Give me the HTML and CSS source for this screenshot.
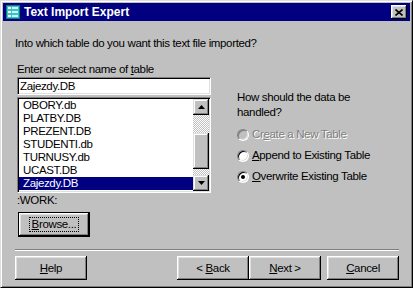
FILE: index.html
```html
<!DOCTYPE html>
<html lang="en">
<head>
    <meta charset="UTF-8">
    <title>Text Import Expert</title>
    <link rel="stylesheet" href="styles.css">
</head>
<body>
    <div class="window">
        <div class="titlebar">
            <svg class="app-icon" viewBox="0 0 16 16" width="16" height="16">
                <rect x="1" y="1" width="14" height="14" fill="#008080"/>
                <rect x="2" y="2" width="12" height="12" fill="#40c0c0"/>
                <rect x="3" y="3" width="3" height="2" fill="#fff"/>
                <rect x="7" y="3" width="6" height="2" fill="#c0ffff"/>
                <rect x="3" y="7" width="3" height="2" fill="#fff"/>
                <rect x="7" y="7" width="6" height="2" fill="#c0ffff"/>
                <rect x="3" y="11" width="3" height="2" fill="#fff"/>
                <rect x="7" y="11" width="6" height="2" fill="#c0ffff"/>
            </svg>
            <span class="title">Text Import Expert</span>
            <button class="close">
                <svg viewBox="0 0 8 7" width="8" height="7">
                    <path d="M0.5 0.5 L7.5 6.5 M7.5 0.5 L0.5 6.5" stroke="#000" stroke-width="1.6"/>
                </svg>
            </button>
        </div>

        <div class="content">
            <p class="prompt">Into which table do you want this text file imported?</p>

            <div class="main">
                <div class="left">
                    <label class="field-label">Enter or select name of <u>t</u>able</label>
                    <div class="edit">Zajezdy.DB</div>
                    <div class="listbox">
                        <ul class="items">
                            <li>OBORY.db</li>
                            <li>PLATBY.DB</li>
                            <li>PREZENT.DB</li>
                            <li>STUDENTI.db</li>
                            <li>TURNUSY.db</li>
                            <li>UCAST.DB</li>
                            <li class="selected">Zajezdy.DB</li>
                        </ul>
                        <div class="scrollbar">
                            <div class="sb-btn">
                                <svg viewBox="0 0 7 4" width="7" height="4"><polygon points="3.5,0 7,4 0,4" fill="#000"/></svg>
                            </div>
                            <div class="sb-track"><div class="sb-thumb"></div></div>
                            <div class="sb-btn">
                                <svg viewBox="0 0 7 4" width="7" height="4"><polygon points="0,0 7,0 3.5,4" fill="#000"/></svg>
                            </div>
                        </div>
                    </div>
                    <div class="path">:WORK:</div>
                    <button class="btn default"><span class="focus"><u>B</u>rowse...</span></button>
                </div>

                <div class="right">
                    <p class="question">How should the data be<br>handled?</p>
                    <div class="options">
                        <div class="option disabled"><span class="radio"></span><span>Cr<u>e</u>ate a New Table</span></div>
                        <div class="option"><span class="radio"></span><span><u>A</u>ppend to Existing Table</span></div>
                        <div class="option"><span class="radio checked"></span><span><u>O</u>verwrite Existing Table</span></div>
                    </div>
                </div>
            </div>

            <div class="separator"></div>

            <div class="buttons">
                <button class="btn"><u>H</u>elp</button>
                <div class="nav">
                    <button class="btn">&lt; <u>B</u>ack</button>
                    <button class="btn"><u>N</u>ext &gt;</button>
                    <button class="btn cancel"><u>C</u>ancel</button>
                </div>
            </div>
        </div>
    </div>
</body>
</html>
```

FILE: styles.css
```css
* {
    box-sizing: border-box;
}
body {
    margin: 0;
    background: #c0c0c0;
    font-family: "Liberation Sans", Arial, sans-serif;
    font-size: 11.5px;
    letter-spacing: -0.35px;
    line-height: 15px;
    color: #000;
}
u {
    text-underline-offset: 1px;
}
.window {
    width: 413px;
    height: 288px;
    display: flex;
    flex-direction: column;
    background: #c0c0c0;
    border: 1px solid;
    border-color: #dfdfdf #000 #000 #dfdfdf;
    box-shadow: inset 1px 1px #fff, inset -1px -1px #808080;
    padding: 2px;
}
.titlebar {
    height: 18px;
    display: flex;
    align-items: center;
    padding: 0 3px 0 2px;
    background: #000080;
    color: #fff;
}
.app-icon {
    flex: none;
}
.title {
    flex: 1;
    margin-left: 3px;
    font-size: 12px;
    font-weight: bold;
    letter-spacing: 0;
    line-height: 18px;
}
.close {
    width: 16px;
    height: 14px;
    padding: 0;
    border: 0;
    display: flex;
    align-items: center;
    justify-content: center;
    background: #c0c0c0;
    box-shadow: inset -1px -1px #000, inset 1px 1px #fff, inset -2px -2px #808080, inset 2px 2px #dfdfdf;
}
.content {
    flex: 1;
    display: flex;
    flex-direction: column;
    padding: 15px 11px 0 12px;
}
.prompt {
    margin: 0;
}
.main {
    display: flex;
    gap: 26px;
    margin-top: 11px;
    padding-left: 2px;
}
.left {
    width: 194px;
}
.field-label {
    display: block;
}
.edit, .listbox {
    background: #fff;
    border: 1px solid;
    border-color: #808080 #fff #fff #808080;
    box-shadow: inset 1px 1px #000, inset -1px -1px #dfdfdf;
}
.edit {
    height: 18px;
    padding: 1px 0 0 2px;
    line-height: 14px;
}
.listbox {
    height: 96px;
    margin-top: 2px;
    padding: 1px;
    display: flex;
}
.items {
    flex: 1;
    list-style: none;
    margin: 0;
    padding: 0;
}
.items li {
    height: 13px;
    line-height: 13px;
    padding-left: 4px;
}
.items .selected {
    background: #000080;
    color: #fff;
}
.scrollbar {
    width: 16px;
    display: flex;
    flex-direction: column;
}
.sb-btn {
    height: 16px;
    display: flex;
    align-items: center;
    justify-content: center;
    background: #c0c0c0;
    box-shadow: inset -1px -1px #000, inset 1px 1px #dfdfdf, inset -2px -2px #808080, inset 2px 2px #fff;
}
.sb-track {
    flex: 1;
    padding-top: 18px;
    background: repeating-conic-gradient(#c0c0c0 0 25%, #fff 0 50%) 0 0 / 2px 2px;
}
.sb-thumb {
    height: 36px;
    background: #c0c0c0;
    box-shadow: inset -1px -1px #000, inset 1px 1px #dfdfdf, inset -2px -2px #808080, inset 2px 2px #fff;
}
.path {
    line-height: 14px;
}
.btn {
    width: 72px;
    height: 24px;
    padding: 0;
    border: 0;
    font: inherit;
    letter-spacing: inherit;
    color: #000;
    background: #c0c0c0;
    box-shadow: inset -1px -1px #000, inset 1px 1px #fff, inset -2px -2px #808080, inset 2px 2px #dfdfdf;
}
.btn.default {
    height: 25px;
    margin-top: 5px;
    margin-left: 1px;
    border: 1px solid #000;
}
.focus {
    display: inline-block;
    padding: 0 2px;
    line-height: 13px;
    border: 1px dotted #000;
}
.right {
    padding-top: 28px;
}
.question {
    margin: 0;
}
.options {
    margin-top: 4px;
}
.option {
    height: 21px;
    display: flex;
    align-items: center;
    gap: 3px;
}
.radio {
    position: relative;
    width: 12px;
    height: 12px;
    border-radius: 50%;
    background: #fff;
    border: 1px solid;
    border-color: #808080 #fff #fff #808080;
    box-shadow: inset 1px 1px #000, inset -1px -1px #dfdfdf;
}
.radio.checked::after {
    content: "";
    position: absolute;
    left: 3px;
    top: 3px;
    width: 4px;
    height: 4px;
    border-radius: 50%;
    background: #000;
}
.option.disabled {
    color: #808080;
    text-shadow: 1px 1px #fff;
}
.option.disabled .radio {
    background: #c0c0c0;
    box-shadow: inset 1px 1px #808080, inset -1px -1px #dfdfdf;
}
.separator {
    height: 2px;
    margin-top: 12px;
    border-top: 1px solid #808080;
    border-bottom: 1px solid #fff;
}
.buttons {
    display: flex;
    justify-content: space-between;
    margin-top: 5px;
}
.nav {
    display: flex;
}
.cancel {
    margin-left: 6px;
}
```
